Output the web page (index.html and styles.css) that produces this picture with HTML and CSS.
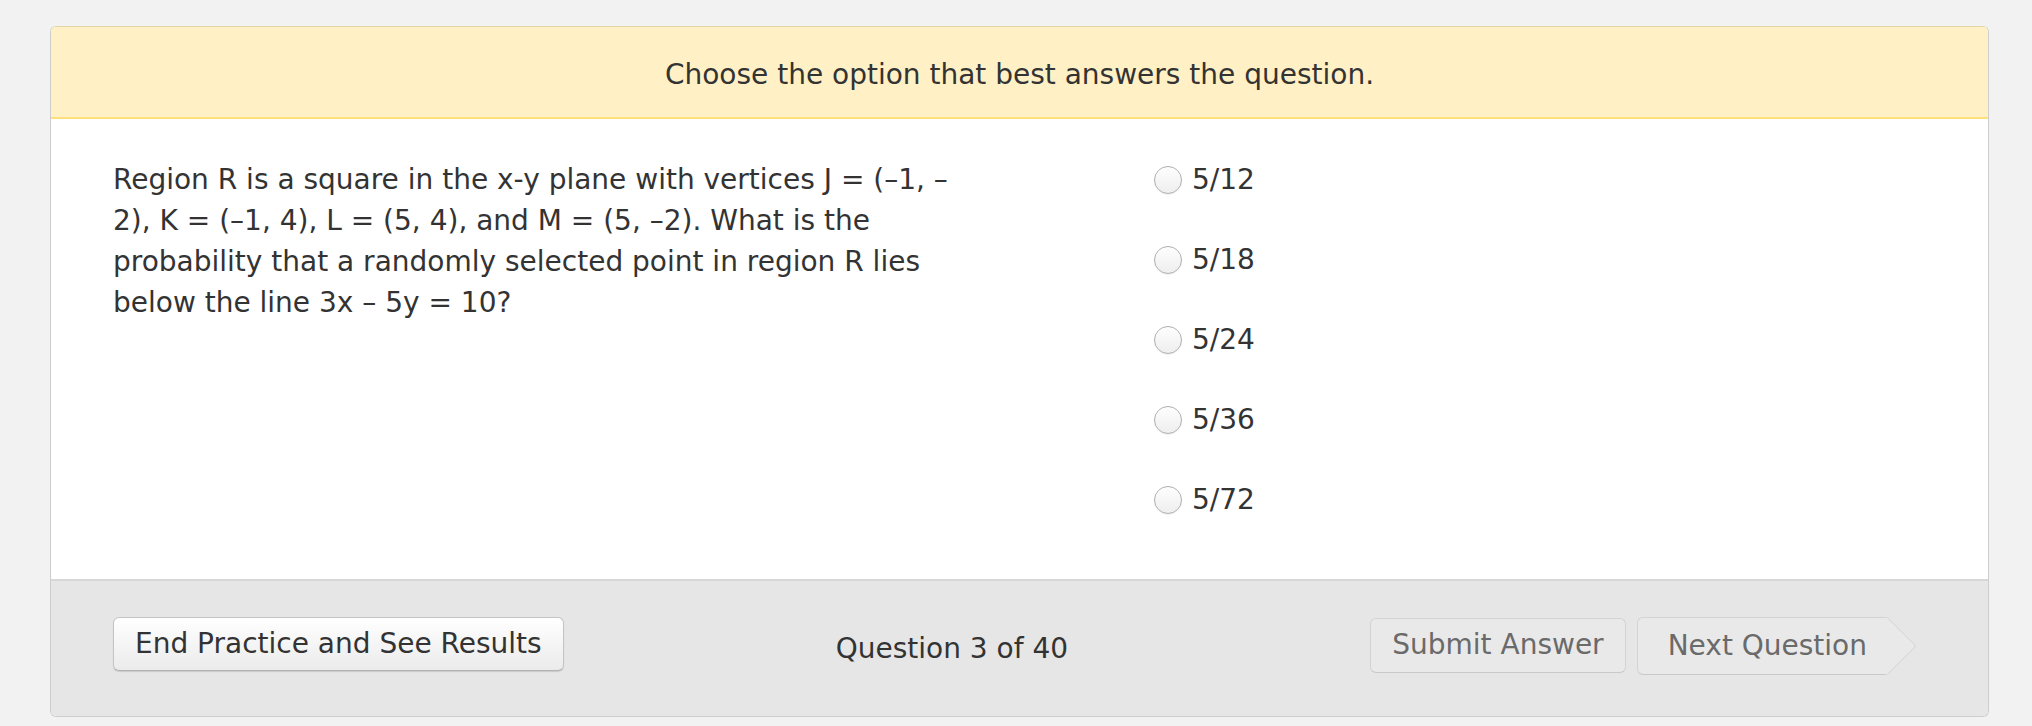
FILE: index.html
```html
<!DOCTYPE html>
<html lang="en">
<head>
<meta charset="utf-8">
<title>Practice Question</title>
<link rel="stylesheet" href="styles.css">
</head>
<body>
<div class="card">
  <div class="card-header">Choose the option that best answers the question.</div>
  <div class="card-body">
    <p class="question">Region R is a square in the x-y plane with vertices J = (–1, –2), K = (–1, 4), L = (5, 4), and M = (5, –2). What is the probability that a randomly selected point in region R lies below the line 3x – 5y = 10?</p>
    <ul class="options">
      <li class="option"><span class="radio"></span><span class="label">5/12</span></li>
      <li class="option"><span class="radio"></span><span class="label">5/18</span></li>
      <li class="option"><span class="radio"></span><span class="label">5/24</span></li>
      <li class="option"><span class="radio"></span><span class="label">5/36</span></li>
      <li class="option"><span class="radio"></span><span class="label">5/72</span></li>
    </ul>
  </div>
  <div class="card-footer">
    <button class="btn btn-end">End Practice and See Results</button>
    <div class="progress">Question 3 of 40</div>
    <div class="nav">
      <button class="btn btn-disabled btn-submit">Submit Answer</button>
      <button class="btn btn-disabled btn-next">Next Question</button>
    </div>
  </div>
</div>
</body>
</html>
```
FILE: styles.css
```css
html, body {
  margin: 0;
  padding: 0;
  background: #f2f2f2;
}

body {
  font-family: "DejaVu Sans", Verdana, sans-serif;
  font-size: 28px;
  color: #333333;
  padding-top: 26px;
}

.card {
  margin: 0 43px 0 50px;
  border: 1px solid #cdcdcd;
  border-top-color: #e2d6a6;
  border-radius: 6px;
  overflow: hidden;
  background: #ffffff;
}

.card-header {
  background: #fff1c5;
  border-bottom: 2px solid #fde07c;
  text-align: center;
  line-height: 41px;
  padding: 27px 0 22px;
}

.card-body {
  display: grid;
  grid-template-columns: 1040px 1fr;
  padding: 40px 62px 59px;
}

.question {
  margin: 0;
  width: 862px;
  line-height: 41px;
}

.options {
  list-style: none;
  margin: 0;
  padding: 0 0 0 1px;
  display: flex;
  flex-direction: column;
  gap: 39px;
}

.option {
  display: flex;
  align-items: center;
  height: 41px;
  line-height: 41px;
}

.radio {
  width: 26px;
  height: 26px;
  border: 1px solid #aeaeae;
  border-radius: 50%;
  background: linear-gradient(#fefefe, #eeeeee);
  box-shadow: inset 0 1px 1px rgba(255,255,255,0.9), 0 1px 1px rgba(0,0,0,0.05);
  margin-right: 10px;
  flex: none;
}

.card-footer {
  display: flex;
  align-items: flex-start;
  background: #e6e6e6;
  border-top: 2px solid #d7d7d7;
  padding: 36px 71px 41px 62px;
}

.btn {
  font-family: inherit;
  font-size: 28px;
  line-height: 34px;
  border-radius: 6px;
  margin: 0;
}

.btn-end {
  color: #333333;
  background: linear-gradient(#ffffff, #ebebeb);
  border: 1px solid #c4c4c4;
  border-bottom-color: #b2b2b2;
  padding: 9px 21px;
  box-shadow: 0 1px 1px rgba(0,0,0,0.12);
}

.progress {
  margin: 11px 0 0 272px;
  line-height: 41px;
}

.nav {
  margin-left: auto;
  display: flex;
  align-items: flex-start;
  gap: 11px;
}

.btn-disabled {
  color: #6a6a6a;
  background: #e9e9e9;
  border: 1px solid #d3d3d3;
  border-bottom-color: #c9c9c9;
}

.btn-submit {
  margin-top: 1px;
  padding: 9px 21px 10px;
}

.btn-next {
  position: relative;
  z-index: 0;
  padding: 11px 20px 11px 30px;
  border-right: none;
  border-top-right-radius: 0;
  border-bottom-right-radius: 0;
  margin-right: 30px;
}

.btn-next::after {
  content: "";
  position: absolute;
  z-index: -1;
  top: 7px;
  right: -21px;
  width: 41px;
  height: 41px;
  background: #e9e9e9;
  border-top: 1px solid #d3d3d3;
  border-right: 1px solid #d3d3d3;
  transform: rotate(45deg);
  border-top-right-radius: 3px;
}
```
